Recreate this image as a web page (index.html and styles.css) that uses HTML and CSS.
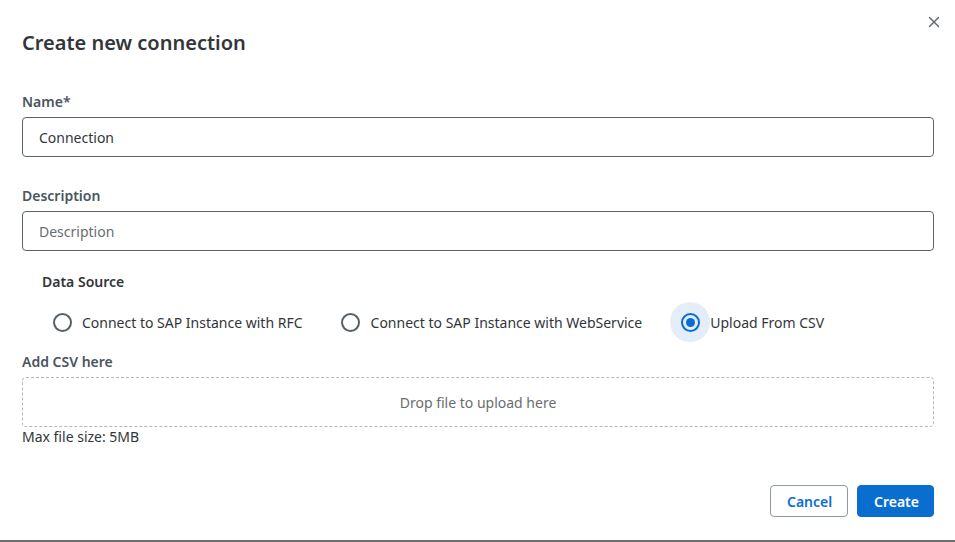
FILE: index.html
```html
<!DOCTYPE html>
<html lang="en">
<head>
  <meta charset="UTF-8" />
  <meta name="viewport" content="width=device-width, initial-scale=1.0" />
  <title>Create new connection</title>
  <link rel="stylesheet" href="styles.css">
</head>
<body>
  <div class="dialog">
    <button class="close-btn" aria-label="Close">
      <svg width="12" height="12" viewBox="0 0 12 12">
        <path d="M1.5 1.5 L10.5 10.5 M10.5 1.5 L1.5 10.5" stroke="#5b646c" stroke-width="1.4" stroke-linecap="round" fill="none" />
      </svg>
    </button>

    <h2 class="title">Create new connection</h2>

    <label class="field-label" for="nameInput">Name*</label>
    <input class="text-input" id="nameInput" type="text" value="Connection" />

    <label class="field-label spaced" for="descInput">Description</label>
    <input class="text-input" id="descInput" type="text" placeholder="Description" />

    <div class="source-label">Data Source</div>
    <div class="radio-group">
      <label class="radio-item">
        <span class="radio-halo"><span class="radio"></span></span>
        Connect to SAP Instance with RFC
      </label>
      <label class="radio-item">
        <span class="radio-halo"><span class="radio"></span></span>
        Connect to SAP Instance with WebService
      </label>
      <label class="radio-item checked">
        <span class="radio-halo"><span class="radio"></span></span>
        Upload From CSV
      </label>
    </div>

    <div class="field-label">Add CSV here</div>
    <div class="drop-zone">Drop file to upload here</div>
    <div class="hint">Max file size: 5MB</div>

    <div class="actions">
      <button class="btn btn-secondary">Cancel</button>
      <button class="btn btn-primary">Create</button>
    </div>
  </div>
</body>
</html>
```

FILE: styles.css
```css
body {
  margin: 0;
  font-family: 'Noto Sans', 'Open Sans', sans-serif;
  background: #fff;
  color: #32363a;
}

.dialog {
  position: relative;
  box-sizing: border-box;
  height: 542px;
  padding: 29px 21px 0 22px;
  border-bottom: 2px solid #6e6e6e;
  display: flex;
  flex-direction: column;
}

.close-btn {
  position: absolute;
  top: 16px;
  right: 15px;
  border: none;
  background: none;
  padding: 0;
  width: 12px;
  height: 12px;
  cursor: pointer;
}

.title {
  margin: 0;
  font-size: 20px;
  line-height: 28px;
  font-weight: 600;
  color: #32363a;
}

.field-label {
  display: block;
  font-size: 14px;
  line-height: 20px;
  font-weight: 600;
  color: #4a5560;
  margin: 35px 0 5px;
}

.field-label.spaced {
  margin-top: 29px;
}

.text-input {
  box-sizing: border-box;
  width: 100%;
  height: 40px;
  border: 1px solid #5b656e;
  border-radius: 4px;
  padding: 0 16px;
  font-family: inherit;
  font-size: 14px;
  color: #32363a;
  outline: none;
}

.text-input::placeholder {
  color: #6a6d70;
}

.source-label {
  font-size: 14px;
  line-height: 20px;
  font-weight: 600;
  color: #32363a;
  margin: 21px 0 0 20px;
}

.radio-group {
  display: flex;
  gap: 28px;
  margin: 10px 0 0 20px;
}

.radio-item {
  display: flex;
  align-items: center;
  font-size: 14px;
  color: #32363a;
  cursor: pointer;
}

.radio-halo {
  width: 40px;
  height: 40px;
  border-radius: 50%;
  display: flex;
  align-items: center;
  justify-content: center;
}

.radio {
  box-sizing: border-box;
  width: 19px;
  height: 19px;
  border: 2px solid #556068;
  border-radius: 50%;
  display: flex;
  align-items: center;
  justify-content: center;
}

.radio-item.checked .radio-halo {
  background: #e4eefa;
}

.radio-item.checked .radio {
  border-color: #0a6ed1;
}

.radio-item.checked .radio::after {
  content: '';
  width: 9px;
  height: 9px;
  border-radius: 50%;
  background: #0a6ed1;
}

.radio-group + .field-label {
  margin-top: 10px;
}

.drop-zone {
  box-sizing: border-box;
  height: 50px;
  border: 1px dashed #b3b8bd;
  border-radius: 4px;
  display: flex;
  align-items: center;
  justify-content: center;
  font-size: 14px;
  color: #6a6d70;
}

.hint {
  font-size: 14px;
  line-height: 20px;
  color: #32363a;
}

.actions {
  display: flex;
  justify-content: flex-end;
  gap: 9px;
  margin-top: 38px;
}

.btn {
  box-sizing: border-box;
  height: 32px;
  padding: 0 16px;
  border-radius: 4px;
  font-family: inherit;
  font-size: 14px;
  font-weight: 600;
  cursor: pointer;
}

.btn-secondary {
  width: 78px;
  background: #fff;
  color: #0a6ed1;
  border: 1px solid #8d99a4;
}

.btn-primary {
  width: 77px;
  background: #0a6ed1;
  color: #fff;
  border: 1px solid #0a6ed1;
}
```
